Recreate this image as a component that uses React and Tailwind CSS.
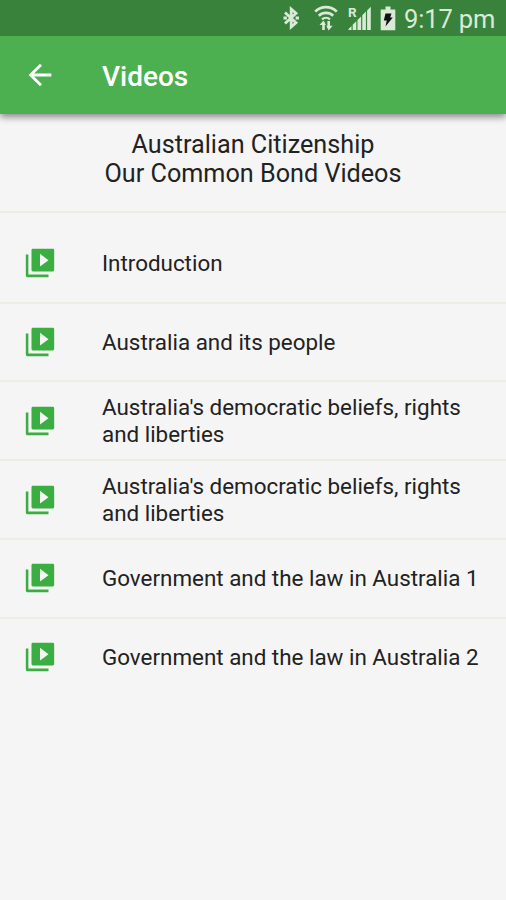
import React from 'react';
import { MdArrowBack } from 'react-icons/md';

const videos = [
    { id: 1, title: 'Introduction' },
    { id: 2, title: 'Australia and its people' },
    { id: 3, title: "Australia's democratic beliefs, rights and liberties" },
    { id: 4, title: "Australia's democratic beliefs, rights and liberties" },
    { id: 5, title: 'Government and the law in Australia 1' },
    { id: 6, title: 'Government and the law in Australia 2' },
];

const BluetoothIcon = () => (
    <svg width="18" height="26" viewBox="0 0 18 26" fill="none" stroke="currentColor" strokeWidth="2.8">
        <path d="M3 7.5 14 17.8 9.2 22V4L14 8.2 3 18.5" />
        <path d="M1.5 11.5h3.4v3H1.5zM13.6 11.5H17v3h-3.4z" fill="currentColor" stroke="none" />
    </svg>
);

const WifiIcon = () => (
    <svg width="24" height="26" viewBox="0 0 24 26" fill="none" stroke="currentColor">
        <path d="M1.2 6.6a15.5 15.5 0 0 1 21.6 0" strokeWidth="2.7" />
        <path d="M4.8 10.7a10.6 10.6 0 0 1 14.4 0" strokeWidth="2.6" />
        <path d="M8 14.4a6 6 0 0 1 8 0" strokeWidth="2.4" />
        <path d="M9.5 25v-7.5M14.7 16v7" strokeWidth="2.6" />
        <path d="M5.5 20 9.5 15.4l2.4 4.6zM12.3 20.8l2.4 4.6 4-4.6z" fill="currentColor" stroke="none" />
    </svg>
);

const SignalIcon = () => (
    <svg width="24" height="26" viewBox="0 0 24 26" fill="currentColor">
        <text x="0" y="12" fontSize="13.5" fontWeight="700" fontFamily="Roboto, sans-serif">R</text>
        <path d="M.5 25v-1L3.5 21v4zM4.7 25v-5.2L8.3 16.2V25zM9.5 25V15l3.6-3.6V25zM14.3 25V10.2l3.6-3.6V25zM19.1 25V5.4l3.7-3.7V25z" />
    </svg>
);

const BatteryIcon = () => (
    <svg width="16" height="26" viewBox="0 0 16 26" fill="currentColor">
        <path d="M5.5 1.5h5v3h4.8v20.8H.7V4.5h4.8z" />
        <path d="M5.5 8.5h6l-1.3 4h2.6L5.5 21.5l1.2-6H3.8z" fill="#111" />
    </svg>
);

const VideoIcon = () => (
    <svg className="size-[34px] shrink-0" viewBox="0 0 24 24" fill="#3bae41">
        <path d="M2 6h1.8v14.2H18V22H3a1 1 0 0 1-1-1z" />
        <path d="M7 2h14a1 1 0 0 1 1 1v14a1 1 0 0 1-1 1H7a1 1 0 0 1-1-1V3a1 1 0 0 1 1-1zm5 3.5v9l6-4.5z" />
    </svg>
);

const StatusBar = () => (
    <div className="relative z-10 flex h-9 items-center justify-end bg-[#39823c] pr-3 text-[#d9ead7]">
        <div className="mr-[14px]"><BluetoothIcon /></div>
        <div className="mr-[10px]"><WifiIcon /></div>
        <div className="mr-2"><SignalIcon /></div>
        <div className="mr-2"><BatteryIcon /></div>
        <span className="w-[90px] whitespace-nowrap pt-0.5 text-[25.5px] leading-8 tracking-[-0.15px]">9:17 pm</span>
    </div>
);

const AppBar = () => (
    <header className="relative flex h-[78px] items-center bg-[#4caf50] pl-[23px] text-white shadow-[0_3px_7px_rgba(0,0,0,0.45)]">
        <button aria-label="Back">
            <MdArrowBack className="size-[34px]" />
        </button>
        <h1 className="ml-[45px] pt-1 text-[28px] font-medium leading-9">Videos</h1>
    </header>
);

const VideoRow = ({ title }) => (
    <li className="flex h-[78.8px] items-center border-b-2 border-[#eceee3] pl-[23px] last:border-transparent">
        <VideoIcon />
        <span className="ml-[45px] w-[390px] text-[22.4px] leading-[26.4px]">{title}</span>
    </li>
);

const App = () => {
    return (
        <div className="min-h-screen bg-[#f5f5f5] font-['Roboto',sans-serif] text-[#222]">
            <StatusBar />
            <AppBar />
            <h2 className="h-[98.5px] border-b-2 border-[#eceee3] pt-[15.5px] text-center text-[25.2px] leading-[29.5px]">
                Australian Citizenship
                <br />
                Our Common Bond Videos
            </h2>
            <ul className="pt-[12.4px]">
                {videos.map((video) => (
                    <VideoRow key={video.id} title={video.title} />
                ))}
            </ul>
        </div>
    );
};

export default App;
